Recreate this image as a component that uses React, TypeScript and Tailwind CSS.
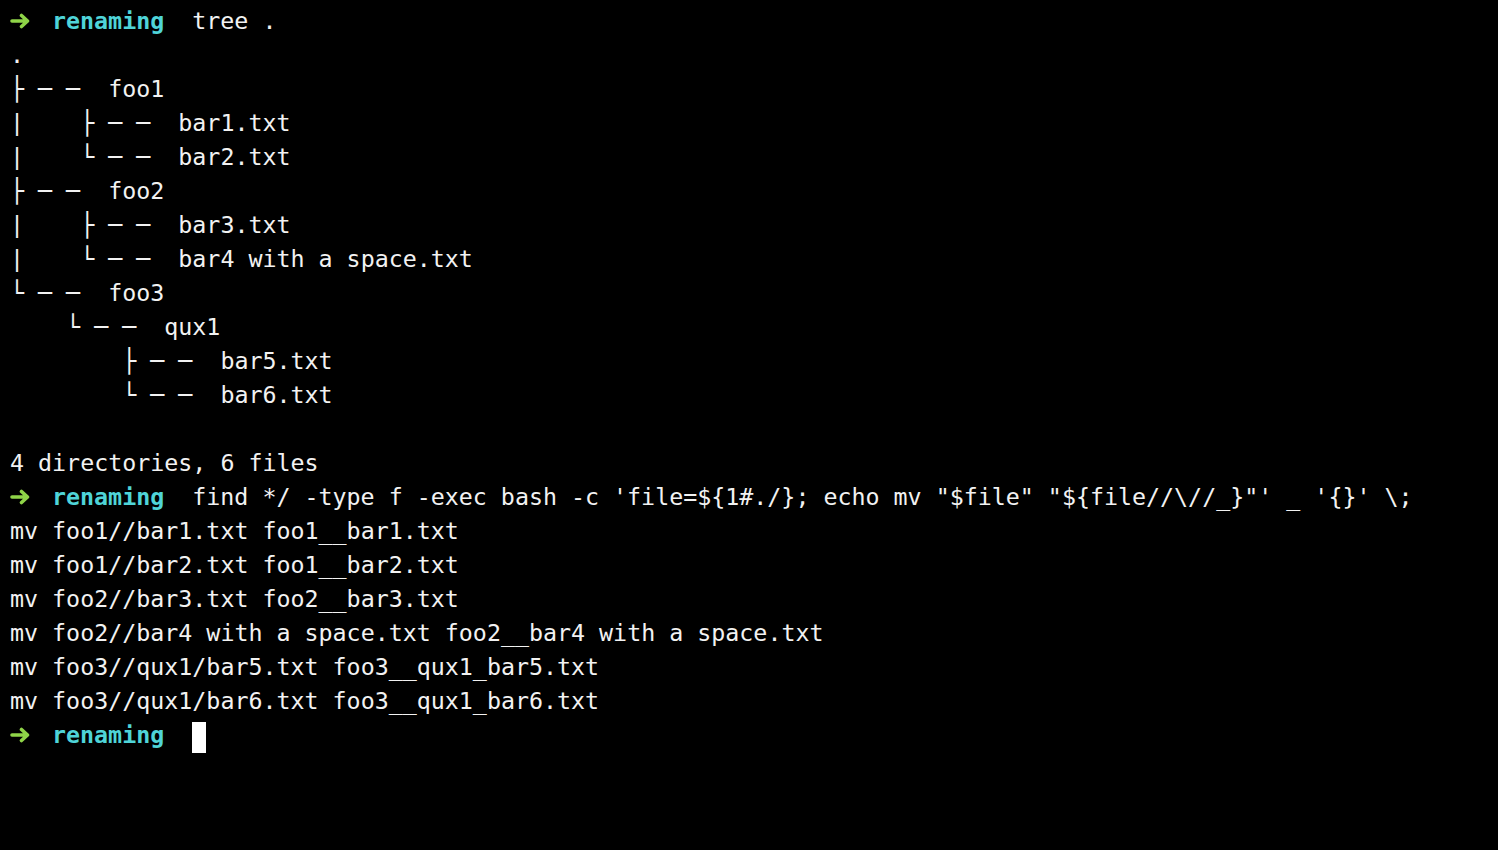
const tree = [
  '.',
  '├ ─ ─  foo1',
  '|    ├ ─ ─  bar1.txt',
  '|    └ ─ ─  bar2.txt',
  '├ ─ ─  foo2',
  '|    ├ ─ ─  bar3.txt',
  '|    └ ─ ─  bar4 with a space.txt',
  '└ ─ ─  foo3',
  '    └ ─ ─  qux1',
  '        ├ ─ ─  bar5.txt',
  '        └ ─ ─  bar6.txt',
  '',
  '4 directories, 6 files',
]

const moves = [
  'mv foo1//bar1.txt foo1__bar1.txt',
  'mv foo1//bar2.txt foo1__bar2.txt',
  'mv foo2//bar3.txt foo2__bar3.txt',
  'mv foo2//bar4 with a space.txt foo2__bar4 with a space.txt',
  'mv foo3//qux1/bar5.txt foo3__qux1_bar5.txt',
  'mv foo3//qux1/bar6.txt foo3__qux1_bar6.txt',
]

// zsh prompt: green arrow + bold cyan dir name
function Prompt({ children }: { children?: React.ReactNode }) {
  return (
    <div className="h-[34px]">
      <span className="inline-block w-[42px] align-middle">
        <svg width="21" height="16" viewBox="0 0 21 16" fill="none" className="block -translate-y-[2px]">
          <path
            d="M2 8H17M11.5 2.5L17.5 8L11.5 13.5"
            stroke="#8fd448"
            strokeWidth="3.6"
            strokeLinecap="round"
            strokeLinejoin="round"
          />
        </svg>
      </span>
      <span className="font-bold text-[#4fd4d8]">renaming</span>
      <span>{'  '}</span>
      {children}
    </div>
  )
}

export default function App() {
  return (
    <div className="h-[850px] w-full overflow-hidden bg-black pl-[10px] pt-[4px] font-['DejaVu_Sans_Mono',monospace] text-[23.3px] leading-[34px] whitespace-pre text-[#f2f2f2]">
      <Prompt>tree .</Prompt>
      {tree.map((line, i) => (
        <div key={i} className="h-[34px]">
          {line}
        </div>
      ))}
      <Prompt>
        {`find */ -type f -exec bash -c 'file=\${1#./}; echo mv "$file" "\${file//\\//_}"' _ '{}' \\;`}
      </Prompt>
      {moves.map((line, i) => (
        <div key={i} className="h-[34px]">
          {line}
        </div>
      ))}
      <Prompt>
        <span className="inline-block h-[31px] w-[14px] translate-y-[1px] bg-white align-middle" />
      </Prompt>
    </div>
  )
}
